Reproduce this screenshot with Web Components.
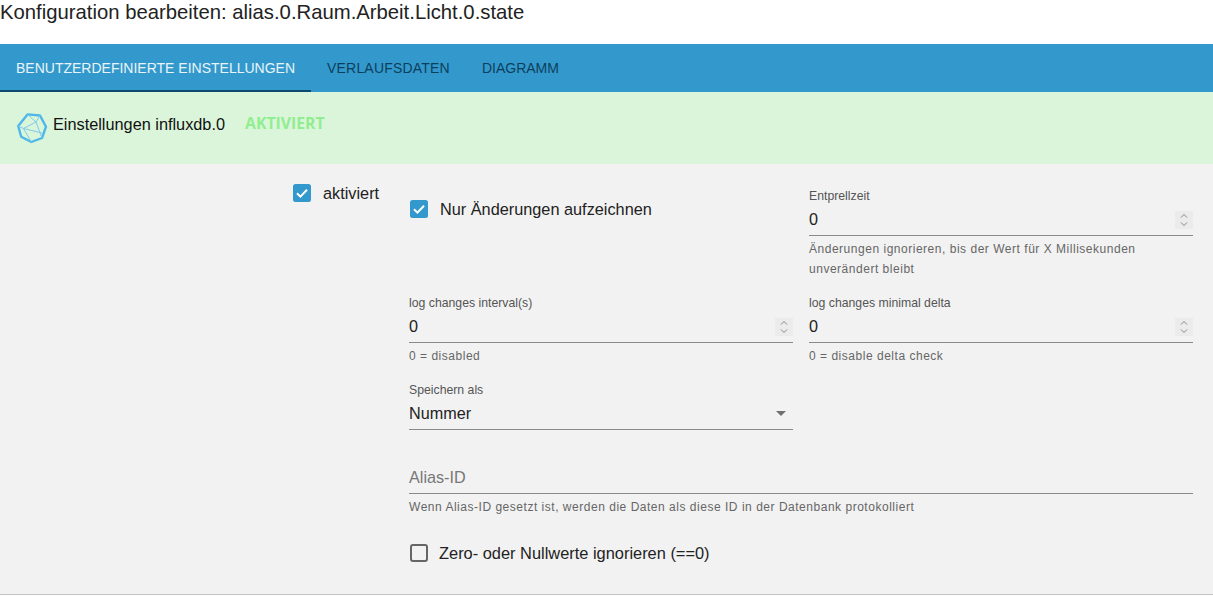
<!DOCTYPE html>
<html lang="de">
<head>
<meta charset="utf-8">
<title>Konfiguration bearbeiten</title>
<style>
  html, body { margin: 0; padding: 0; background: #fff; }
  body { font-family: "Liberation Sans", Arial, sans-serif; width: 1213px; height: 596px; overflow: hidden; }
</style>
</head>
<body>
<config-dialog>
  <tab-bar slot="tabs"></tab-bar>
  <influx-header slot="head"></influx-header>
  <check-box slot="enable" checked style="--gap:12px">aktiviert</check-box>

  <check-box slot="form" checked style="--gap:12px;--pad:11px;--left:1px">Nur Änderungen aufzeichnen</check-box>
  <num-field slot="form" label="Entprellzeit" value="0" spin>Änderungen ignorieren, bis der Wert für X Millisekunden unverändert bleibt</num-field>
  <num-field slot="form" label="log changes interval(s)" value="0" spin>0 = disabled</num-field>
  <num-field slot="form" label="log changes minimal delta" value="0" spin>0 = disable delta check</num-field>
  <select-field slot="form" label="Speichern als" value="Nummer"></select-field>
  <num-field slot="wide" placeholder="Alias-ID" style="--top:31px">Wenn Alias-ID gesetzt ist, werden die Daten als diese ID in der Datenbank protokolliert</num-field>
  <check-box slot="wide" style="--gap:11px;--pad:27px;--left:1px;--size:16.4px">Zero- oder Nullwerte ignorieren (==0)</check-box>
</config-dialog>

<script>
class ConfigDialog extends HTMLElement {
  constructor() {
    super();
    const template = document.createElement('template');
    template.innerHTML = `
      <style>
        :host { display: block; color: #000; }
        h1 {
          margin: 0;
          height: 44px;
          font: 400 20.3px/24px "Liberation Sans", Arial, sans-serif;
          color: #222;
        }
        .panel { background: #f2f2f2; border-bottom: 1px solid #c4c4c4; height: 430px; display: flex; padding-left: 293px; }
        .left-col { width: 116px; flex: none; padding-top: 20px; }
        .form { width: 784px; }
        .grid { display: grid; grid-template-columns: 384px 384px; column-gap: 16px; row-gap: 17px; align-items: start; padding-top: 25px; }
        .wide { display: block; }
      </style>
      <h1>Konfiguration bearbeiten: alias.0.Raum.Arbeit.Licht.0.state</h1>
      <slot name="tabs"></slot>
      <slot name="head"></slot>
      <div class="panel">
        <div class="left-col"><slot name="enable"></slot></div>
        <div class="form">
          <div class="grid"><slot name="form"></slot></div>
          <div class="wide"><slot name="wide"></slot></div>
        </div>
      </div>
    `;
    this.attachShadow({ mode: 'open' });
    this.shadowRoot.appendChild(template.content.cloneNode(true));
  }
}

class TabBar extends HTMLElement {
  constructor() {
    super();
    this.attachShadow({ mode: 'open' }).innerHTML = `
      <style>
        :host { display: flex; height: 48px; background: #3399cc; }
        div {
          box-sizing: border-box;
          height: 48px;
          padding: 0 16px;
          font: 400 14px/48px "Liberation Sans", Arial, sans-serif;
          color: #0d3f5c;
          white-space: nowrap;
        }
        .on { color: #e8f4fa; border-bottom: 2px solid #0d4a6e; width: 311px; }
        .wider { letter-spacing: 0.2px; }
      </style>
      <div class="on">BENUTZERDEFINIERTE EINSTELLUNGEN</div>
      <div class="wider">VERLAUFSDATEN</div>
      <div>DIAGRAMM</div>
    `;
  }
}

class InfluxHeader extends HTMLElement {
  constructor() {
    super();
    this.attachShadow({ mode: 'open' }).innerHTML = `
      <style>
        :host {
          display: flex;
          align-items: flex-start;
          height: 72px;
          box-sizing: border-box;
          padding: 20px 0 0 16px;
          background: #dbf5db;
        }
        svg { width: 32px; height: 32px; flex: none; }
        .name { font: 400 16.3px/24px "Liberation Sans", Arial, sans-serif; color: #111; margin: 0 0 0 5px; width: 192px; }
        .state { font: 700 15.8px/22px "Open Sans", "Liberation Sans", sans-serif; color: #90ee90; }
      </style>
      <svg viewBox="0 0 32 32" fill="none" stroke="#4db8e8">
        <path stroke-width="2.4" stroke-linejoin="round" d="M11.500 2.400 24 3.500 30 14.700 26 26 15.300 30 5.200 24.700 2.200 14Z"/>
        <path stroke-width="1" stroke="#7ccbea" d="M11.500 2.400 20 10 26 26M24 3.500 20 10 7.500 16.500 2.200 14M7.500 16.500 15.300 30M7.500 16.500 26 21"/>
      </svg>
      <p class="name">Einstellungen influxdb.0</p>
      <span class="state">AKTIVIERT</span>
    `;
  }
}

class CheckBox extends HTMLElement {
  constructor() {
    super();
    const checked = this.hasAttribute('checked');
    this.attachShadow({ mode: 'open' }).innerHTML = `
      <style>
        :host {
          display: flex;
          align-items: center;
          gap: var(--gap, 12px);
          margin: var(--pad, 0) 0 0 var(--left, 0);
          font: 400 var(--size, 16.3px)/18px "Liberation Sans", Arial, sans-serif;
          color: #222;
          white-space: nowrap;
        }
        svg { width: 18px; height: 18px; flex: none; }
      </style>
      ${checked
        ? `<svg viewBox="0 0 18 18"><rect width="18" height="18" rx="2.5" fill="#3399cc"/><path d="M4 9.300 7.400 12.600 14 5.800" fill="none" stroke="#fff" stroke-width="2"/></svg>`
        : `<svg viewBox="0 0 18 18"><rect x="1" y="1" width="16" height="16" rx="2" fill="none" stroke="#666" stroke-width="2"/></svg>`}
      <slot></slot>
    `;
  }
}

class NumField extends HTMLElement {
  constructor() {
    super();
    const label = this.getAttribute('label');
    const value = this.getAttribute('value');
    const placeholder = this.getAttribute('placeholder');
    const spin = this.hasAttribute('spin');
    this.attachShadow({ mode: 'open' }).innerHTML = `
      <style>
        :host { display: block; margin-top: var(--top, 0); font-family: "Liberation Sans", Arial, sans-serif; }
        .label { font-size: 12.25px; line-height: 14px; height: 14px; color: #555; }
        .input {
          display: flex;
          align-items: center;
          justify-content: space-between;
          box-sizing: border-box;
          height: 33px;
          border-bottom: 1px solid #8a8a8a;
          font-size: 16.2px;
          color: #222;
        }
        .ph { color: #777; }
        .spin { width: 18px; height: 18px; margin-top: 2px; background: #ebebeb; display: block; }
        .help {
          margin-top: 3px;
          font-size: 12px;
          line-height: 20px;
          letter-spacing: 0.52px;
          color: #666;
        }
      </style>
      ${label ? `<div class="label">${label}</div>` : ''}
      <div class="input">
        <span class="${placeholder ? 'ph' : ''}">${value || placeholder}</span>
        ${spin ? `<svg class="spin" viewBox="0 0 18 18" fill="none" stroke="#888" stroke-width="1"><path d="M6 6.500 9 3.500 12 6.500M6 11.500 9 14.500 12 11.500"/></svg>` : ''}
      </div>
      <div class="help"><slot></slot></div>
    `;
  }
}

class SelectField extends HTMLElement {
  constructor() {
    super();
    this.attachShadow({ mode: 'open' }).innerHTML = `
      <style>
        :host { display: block; font-family: "Liberation Sans", Arial, sans-serif; }
        .label { font-size: 12.25px; line-height: 14px; height: 14px; color: #555; }
        .input {
          display: flex;
          align-items: center;
          justify-content: space-between;
          box-sizing: border-box;
          height: 33px;
          border-bottom: 1px solid #8a8a8a;
          font-size: 16.2px;
          color: #222;
        }
        svg { width: 24px; height: 24px; }
      </style>
      <div class="label">${this.getAttribute('label')}</div>
      <div class="input"><span>${this.getAttribute('value')}</span>
        <svg viewBox="0 0 24 24"><path d="M7 10l5 5 5-5z" fill="#707070"/></svg>
      </div>
    `;
  }
}

customElements.define('config-dialog', ConfigDialog);
customElements.define('tab-bar', TabBar);
customElements.define('influx-header', InfluxHeader);
customElements.define('check-box', CheckBox);
customElements.define('num-field', NumField);
customElements.define('select-field', SelectField);
</script>
</body>
</html>
